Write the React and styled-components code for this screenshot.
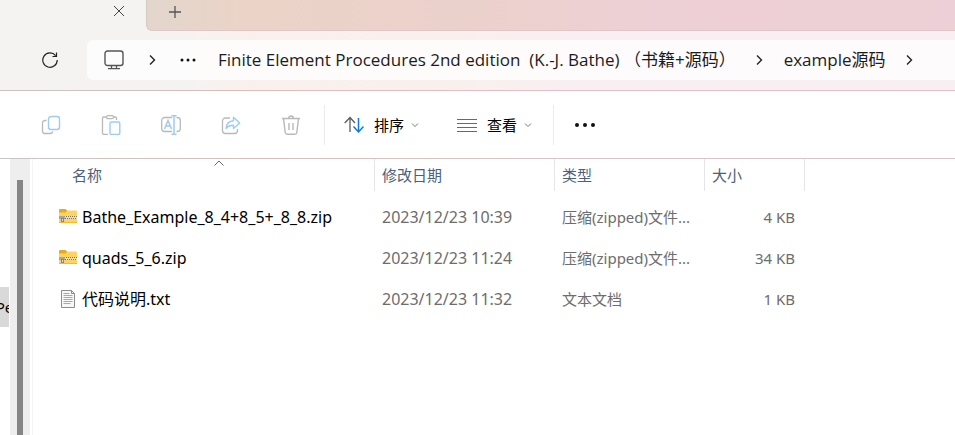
import styled, { createGlobalStyle } from 'styled-components';

const GlobalStyle = createGlobalStyle`
    * {
        box-sizing: border-box;
    }
    body {
        margin: 0;
        background: #fff;
        font-family: 'Noto Sans', 'Noto Sans CJK SC', sans-serif;
        font-size: 15px;
        color: #000;
    }
    button, input {
        font: inherit;
        color: inherit;
    }
`;

const Window = styled.div`
    height: 100vh;
    display: flex;
    flex-direction: column;
    overflow: hidden;
`;
const Chrome = styled.header`
    height: 91px;
    flex: none;
    background: linear-gradient(90deg, #f4f3f1 0%, #f5f3f1 20%, #faf0ed 27%, #f9f0ee 48%, #f9eef2 62%, #f9eff2 100%);
    border-bottom: 1px solid;
    border-image: linear-gradient(90deg, #c8c6c4, #d9bfb9 25%, #dfc0c8 60%) 1;
`;
const Tabs = styled.div`
    height: 31px;
    display: flex;
    align-items: flex-start;
`;
const IconButton = styled.button`
    width: ${(props) => props.$size || 24}px;
    height: ${(props) => props.$size || 24}px;
    flex: none;
    padding: 0;
    border: 0;
    background: none;
    display: flex;
    align-items: center;
    justify-content: center;
    cursor: pointer;

    svg {
        display: block;
        flex: none;
    }
`;
const ActiveTab = styled.div`
    width: 146px;
    padding-right: 16px;
    display: flex;
    justify-content: flex-end;
    flex: none;
`;
const TabStrip = styled.div`
    flex: 1;
    height: 31px;
    padding-left: 16px;
    border-left: 1px solid #d8c9c0;
    border-bottom: 1px solid #dfc6c7;
    border-bottom-left-radius: 6px;
    background: linear-gradient(90deg, #e2d6cc 0%, #ebd3c7 12%, #ebd1cc 40%, #edd0d5 62%, #edcfd7 100%);
`;
const AddressRow = styled.div`
    height: 59px;
    padding: 9px 0 10px 36px;
    display: flex;
    align-items: center;
`;
const AddressBar = styled.nav`
    flex: 1;
    height: 40px;
    margin-left: 24px;
    padding-left: 15px;
    border-radius: 6px 0 0 6px;
    background: rgba(255, 255, 255, 0.75);
    display: flex;
    align-items: center;
    white-space: pre;
    overflow: hidden;
`;
const Crumb = styled.a`
    font-family: 'Open Sans', 'Noto Sans CJK SC', sans-serif;
    font-size: 17px;
    line-height: 24px;
    color: #1c1c1c;
    text-decoration: none;
    margin-left: ${(props) => props.$before || 14}px;
    margin-right: 12px;
`;
const Toolbar = styled.div`
    height: 68px;
    flex: none;
    padding-left: 36px;
    border-bottom: 1px solid;
    border-image: linear-gradient(90deg, #c8c6c6, #d6bfbc 25%, #d9c5c8 60%) 1;
    display: flex;
    align-items: center;
`;
const Actions = styled.div`
    display: flex;
    gap: 30px;
    padding-right: 18px;
`;
const ToolGroup = styled.div`
    height: 40px;
    padding: 0 21px 0 19px;
    border-left: 1px solid #ececec;
    display: flex;
    align-items: center;
    gap: 38px;
`;
const MenuButton = styled.button`
    padding: 0;
    border: 0;
    background: none;
    display: flex;
    align-items: center;
    gap: 10px;
    cursor: pointer;
    line-height: 24px;
`;
const MenuLabel = styled.span`
    margin-right: -3px;
`;
const Body = styled.div`
    flex: 1;
    min-height: 0;
    display: flex;
`;
const Sidebar = styled.aside`
    width: 9px;
    flex: none;
    padding-top: 128px;
    overflow: hidden;
`;
const SideItem = styled.div`
    height: 40px;
    background: #d9d9d9;
    display: flex;
    align-items: center;
    justify-content: center;
    white-space: nowrap;
`;
const Scrollbar = styled.div`
    width: 20px;
    flex: none;
    margin-left: 1px;
    padding: 21px 7px 0;
    background: #eeeeee;
`;
const Thumb = styled.div`
    width: 6px;
    height: 100%;
    background: #858585;
`;
const Main = styled.main`
    flex: 1;
    min-width: 0;
    margin-left: 2px;
    border-left: 1px solid #f4f4f4;
    padding-left: 19px;
`;
const FileTable = styled.table`
    width: 753px;
    table-layout: fixed;
    border-collapse: separate;
    border-spacing: 0;
`;
const HeadCell = styled.th`
    position: relative;
    width: ${(props) => props.$width}px;
    height: 32px;
    padding: 0 7px;
    padding-left: ${(props) => (props.$first ? 20 : 7)}px;
    border-right: 1px solid #e5e5e5;
    color: #4c607a;
    font-weight: 400;
    line-height: 22px;
    text-align: left;
`;
const SortMark = styled.svg`
    position: absolute;
    left: calc(50% + 1px);
    top: 1px;
`;
const Row = styled.tr`
    height: 41px;
`;
const Cell = styled.td`
    padding: 0 7px;
    color: #6d6d6d;
    font-size: ${(props) => (props.$large ? 16 : 15)}px;
    line-height: 22px;
    text-align: ${(props) => (props.$right ? 'right' : 'left')};
    padding-right: ${(props) => (props.$right ? 10 : 7)}px;
    white-space: nowrap;
    overflow: hidden;
    text-overflow: ellipsis;
`;
const NameCell = styled(Cell)`
    color: #000;
`;
const FileName = styled.div`
    display: flex;
    align-items: center;
    gap: 5px;

    svg {
        flex: none;
    }
`;
const Spacer = styled.tbody`
    height: 5px;
`;

const grey = '#b9b9b9';
const blue = '#9dccf0';

const Icon = ({ size = 20, children, ...rest }) => (
    <svg width={size} height={size} viewBox={`0 0 ${size} ${size}`} fill="none" aria-hidden="true" {...rest}>
        {children}
    </svg>
);

const CopyIcon = () => (
    <Icon>
        <path d="M5.500 5.500H4A2.500 2.500 0 0 0 1.500 8v8A2.500 2.500 0 0 0 4 18.500h5.500a2.500 2.500 0 0 0 2.400-2" stroke={grey} strokeWidth="1.300" />
        <rect x="7.500" y="1.500" width="11" height="13" rx="2.500" stroke={blue} strokeWidth="1.400" />
    </Icon>
);

const PasteIcon = () => (
    <Icon>
        <path d="M6 2H2.500A1 1 0 0 0 1.500 3v15a1.500 1.500 0 0 0 1.500 1.500h4M12 2h2.500a1 1 0 0 1 1 1v2" stroke={grey} strokeWidth="1.300" />
        <rect x="5.500" y="0.700" width="7" height="3" rx="1.500" stroke={grey} strokeWidth="1.300" />
        <rect x="9" y="7" width="9.800" height="12.500" rx="1.500" stroke={blue} strokeWidth="1.400" />
    </Icon>
);

const RenameIcon = () => (
    <Icon>
        <path d="M11 2.500H3.700a3 3 0 0 0-3 3v8a3 3 0 0 0 3 3H11M15.500 2.500h.8a3 3 0 0 1 3 3v8a3 3 0 0 1-3 3h-.8" stroke={grey} strokeWidth="1.300" />
        <path d="M3.500 14 7 5.500l3.500 8.500M4.800 11h4.500M10.500 0.700h5M10.500 19.300h5M13 0.700v18.600" stroke={blue} strokeWidth="1.500" />
    </Icon>
);

const ShareIcon = () => (
    <Icon>
        <path d="M9 3H4.500a3 3 0 0 0-3 3v9.500a3 3 0 0 0 3 3h9a3 3 0 0 0 3-3V14" stroke={grey} strokeWidth="1.300" />
        <path d="M12.500 2.300 18.700 8l-6.200 5.500v-3.200c-3.200 0-5.500.8-7.500 3.200.5-4.500 3-7.500 7.500-7.800z" stroke={blue} strokeWidth="1.400" strokeLinejoin="round" />
    </Icon>
);

const TrashIcon = () => (
    <Icon>
        <path d="M1 3.500h18M7.500 3.500a2.500 2.500 0 0 1 5 0M2.500 3.500l1.700 14a2 2 0 0 0 2 1.800h7.600a2 2 0 0 0 2-1.800l1.700-14M8 8v7M12 8v7" stroke={grey} strokeWidth="1.400" />
    </Icon>
);

const SortIcon = () => (
    <Icon>
        <path d="M6 17V2.500M0.700 8 6 2.500 11 8" stroke="#5c5c5c" strokeWidth="1.300" />
        <path d="M14.500 3v14M9.500 11.500l5 5.500 5-5.500" stroke="#0f7bd3" strokeWidth="1.500" />
    </Icon>
);

const ViewIcon = () => (
    <Icon>
        <path d="M0 4.500h20M0 8.500h20M0 12.500h20M0 16.500h20" stroke="#696969" />
    </Icon>
);

const DownIcon = () => (
    <Icon size={8}>
        <path d="m1 2.500 3 3 3-3" stroke="#777" />
    </Icon>
);

const ChevronIcon = () => (
    <Icon size={12}>
        <path d="m4 1.500 4.500 4.500L4 10.500" stroke="#222" strokeWidth="1.400" />
    </Icon>
);

const DotsIcon = ({ size = 20, r = 1.9, gap = 8 }) => (
    <Icon size={size} fill="#111">
        <circle cx={size / 2 - gap} cy={size / 2} r={r} />
        <circle cx={size / 2} cy={size / 2} r={r} />
        <circle cx={size / 2 + gap} cy={size / 2} r={r} />
    </Icon>
);

const ZipIcon = () => (
    <Icon size={18}>
        <path d="M0 5V2a1 1 0 0 1 1-1h5.500l2 2v2z" fill="#e9ab17" />
        <path d="M0 4.500h6.500L8.500 2.500H17a1 1 0 0 1 1 1V15H0z" fill="#ffd35c" />
        <path d="M0 14h18v1H0z" fill="#f0bb3a" />
        <path d="M4 8h14v3H4z" fill="#e9dfc0" />
        <path d="M5 8.500h13M6 10.500h12" stroke="#77736a" strokeDasharray="1 1" />
        <path d="M0 8h6v3H0z" fill="#a5a5a5" />
        <path d="M2 10h3v4H2z" fill="#858585" />
        <path d="M3 11h1v2H3z" fill="#ddd" />
    </Icon>
);

const TextIcon = () => (
    <Icon size={18}>
        <path d="M2.500 0.500h10l3 3v14h-13z" fill="#f7f7f7" stroke="#8b8b8b" />
        <path d="M12.500 0.500v3h3" stroke="#8b8b8b" />
        <path d="M4.500 3.500h6M4.500 5.500h9M4.500 7.500h9M4.500 9.500h9M4.500 11.500h9M4.500 13.500h7" stroke="#a9a9a9" />
    </Icon>
);

const actions = [
    { label: '复制', icon: CopyIcon },
    { label: '粘贴', icon: PasteIcon },
    { label: '重命名', icon: RenameIcon },
    { label: '共享', icon: ShareIcon },
    { label: '删除', icon: TrashIcon },
];

const files = [
    { name: 'Bathe_Example_8_4+8_5+_8_8.zip', date: '2023/12/23 10:39', type: '压缩(zipped)文件...', size: '4 KB', icon: ZipIcon },
    { name: 'quads_5_6.zip', date: '2023/12/23 11:24', type: '压缩(zipped)文件...', size: '34 KB', icon: ZipIcon },
    { name: '代码说明.txt', date: '2023/12/23 11:32', type: '文本文档', size: '1 KB', icon: TextIcon },
];

const App = () => {
    return (
        <Window>
            <GlobalStyle />
            <Chrome>
                <Tabs>
                    <ActiveTab>
                        <IconButton $size={22} aria-label="关闭">
                            <Icon size={12}><path d="m1 1 10 10M11 1 1 11" stroke="#444" /></Icon>
                        </IconButton>
                    </ActiveTab>
                    <TabStrip>
                        <IconButton aria-label="新标签页">
                            <Icon size={12}><path d="M6 0v12M0 6h12" stroke="#555" strokeWidth="1.300" /></Icon>
                        </IconButton>
                    </TabStrip>
                </Tabs>
                <AddressRow>
                    <IconButton $size={27} aria-label="刷新">
                        <Icon size={16}>
                            <path d="M13.600 3.600A7.200 7.200 0 1 0 15.200 8M14.500 0.500v4h-4" stroke="#222" strokeWidth="1.200" />
                        </Icon>
                    </IconButton>
                    <AddressBar>
                        <IconButton aria-label="此电脑">
                            <Icon>
                                <rect x="1" y="1" width="18" height="14.500" rx="2.500" stroke="#555" strokeWidth="1.400" />
                                <path d="M7.500 16v3M12.500 16v3M4 18.700h12" stroke="#555" strokeWidth="1.300" />
                            </Icon>
                        </IconButton>
                        <IconButton $size={52} aria-label="展开"><ChevronIcon /></IconButton>
                        <IconButton $size={20} aria-label="更多"><DotsIcon size={16} r={1.5} gap={6} /></IconButton>
                        <Crumb href="#" $before={20}>Finite Element Procedures 2nd edition  (K.-J. Bathe) （书籍+源码）</Crumb>
                        <IconButton $size={22} aria-label="展开"><ChevronIcon /></IconButton>
                        <Crumb href="#">example源码</Crumb>
                        <IconButton $size={22} aria-label="展开"><ChevronIcon /></IconButton>
                    </AddressBar>
                </AddressRow>
            </Chrome>
            <Toolbar>
                <Actions>
                    {actions.map(({ label, icon: Glyph }) => (
                        <IconButton key={label} $size={30} aria-label={label} disabled><Glyph /></IconButton>
                    ))}
                </Actions>
                <ToolGroup>
                    <MenuButton><SortIcon /><MenuLabel>排序</MenuLabel><DownIcon /></MenuButton>
                    <MenuButton><ViewIcon /><MenuLabel>查看</MenuLabel><DownIcon /></MenuButton>
                </ToolGroup>
                <ToolGroup>
                    <IconButton aria-label="查看更多"><DotsIcon size={24} r={2} /></IconButton>
                </ToolGroup>
            </Toolbar>
            <Body>
                <Sidebar>
                    <SideItem>Pe</SideItem>
                </Sidebar>
                <Scrollbar>
                    <Thumb />
                </Scrollbar>
                <Main>
                    <FileTable>
                        <thead>
                            <tr>
                                <HeadCell $width={323} $first>
                                    名称
                                    <SortMark width="10" height="6" viewBox="0 0 10 6" fill="none">
                                        <path d="m0.500 5.500 4.500-4.500 4.500 4.500" stroke="#666" />
                                    </SortMark>
                                </HeadCell>
                                <HeadCell $width={180}>修改日期</HeadCell>
                                <HeadCell $width={150}>类型</HeadCell>
                                <HeadCell $width={100}>大小</HeadCell>
                            </tr>
                        </thead>
                        <Spacer><tr><td /></tr></Spacer>
                        <tbody>
                            {files.map(({ name, date, type, size, icon: Glyph }) => (
                                <Row key={name}>
                                    <NameCell $large><FileName><Glyph />{name}</FileName></NameCell>
                                    <Cell $large>{date}</Cell>
                                    <Cell>{type}</Cell>
                                    <Cell $right>{size}</Cell>
                                </Row>
                            ))}
                        </tbody>
                    </FileTable>
                </Main>
            </Body>
        </Window>
    );
};

export default App;
